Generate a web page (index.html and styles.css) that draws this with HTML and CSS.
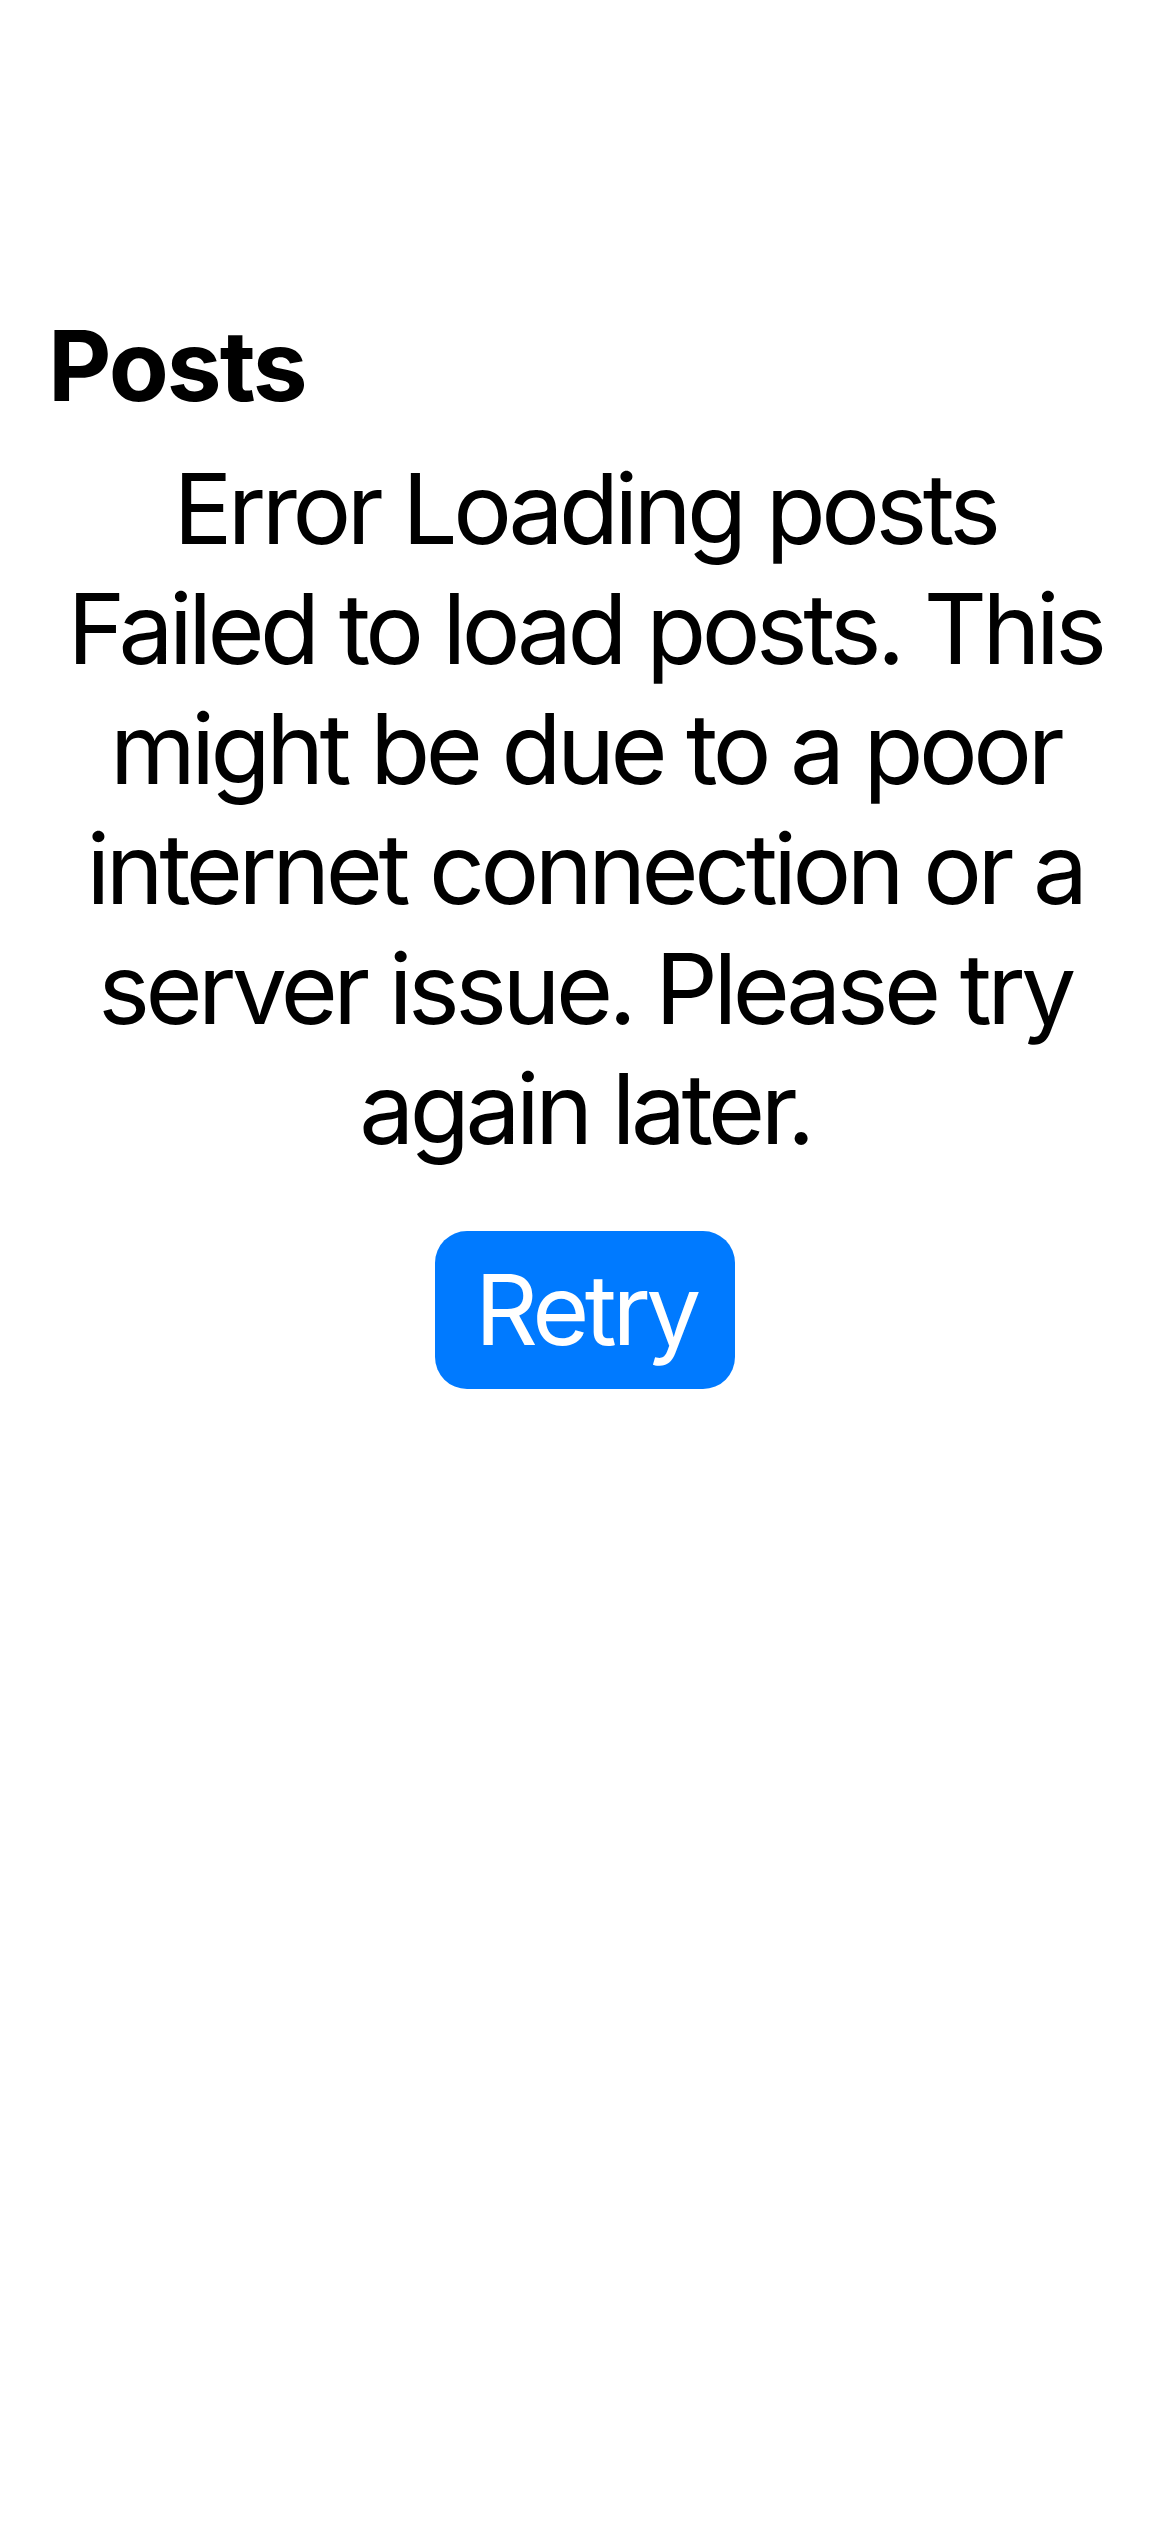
FILE: index.html
```html
<!DOCTYPE html>
<html lang="en">
<head>
<meta charset="utf-8">
<title>Posts</title>
<link rel="stylesheet" href="styles.css">
</head>
<body>
<div class="screen">
  <header class="header">
    <h1 class="title">Posts</h1>
  </header>
  <main class="error">
    <div class="error-title">Error Loading posts</div>
    <div class="error-message">Failed to load posts. This might be due to a poor internet connection or a server issue. Please try again later.</div>
    <button class="retry" type="button">Retry</button>
  </main>
</div>
</body>
</html>
```

FILE: styles.css
```css
html, body {
  margin: 0;
  padding: 0;
  background: #ffffff;
}

body {
  font-family: Inter, "Noto Sans", "Liberation Sans", sans-serif;
  color: #000000;
  width: 1170px;
  min-height: 2532px;
}

.screen {
  display: flex;
  flex-direction: column;
  padding-top: 307px;
}

.header {
  padding: 0 48px;
}

.title {
  margin: 0;
  font-size: 98px;
  line-height: 118px;
  font-weight: 700;
  letter-spacing: -2px;
}

.error {
  display: flex;
  flex-direction: column;
  align-items: center;
  padding: 24px 48px 0;
  text-align: center;
  font-size: 98px;
  line-height: 120px;
  font-weight: 400;
  letter-spacing: -4.5px;
}

.error-title,
.error-message {
  width: 100%;
}

.retry {
  margin-top: 62px;
  padding: 19px 38px 19px 40px;
  border: none;
  border-radius: 32px;
  background: #007aff;
  color: #ffffff;
  font-family: inherit;
  font-size: 98px;
  line-height: 120px;
  font-weight: 400;
  letter-spacing: -4.5px;
}
```
